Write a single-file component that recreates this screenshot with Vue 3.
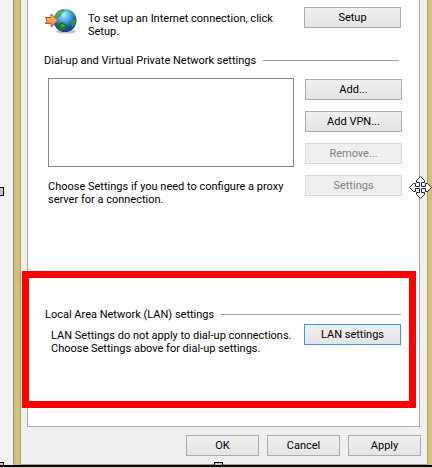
<template>
  <div class="canvas">
    <div class="frame">
      <main class="dialog">
        <div class="panel">
          <section class="row setup">
            <svg class="globe" width="32" height="27" viewBox="0 0 32 27" aria-hidden="true">
              <defs>
                <radialGradient id="sea" cx="45%" cy="25%" r="75%">
                  <stop offset="0" stop-color="#b5f0ff" />
                  <stop offset="0.35" stop-color="#52aee8" />
                  <stop offset="0.7" stop-color="#2456c4" />
                  <stop offset="1" stop-color="#163a94" />
                </radialGradient>
                <linearGradient id="arrow" x1="0" y1="0" x2="0" y2="1">
                  <stop offset="0" stop-color="#ffc078" />
                  <stop offset="1" stop-color="#ef7d2c" />
                </linearGradient>
              </defs>
              <ellipse cx="21" cy="23.500" rx="10" ry="2" fill="#c3c3c3" />
              <circle cx="20" cy="12.500" r="11.500" fill="url(#sea)" />
              <path d="M10 7 13 3 18 1 20 3 17 5 15 9 12 10 9 12z" fill="#4fa65b" />
              <path d="M25 3 28 5 30 8 28 8 26 6z" fill="#49a63c" />
              <path d="M28 11 31 12 30 17 27 19 26 15z" fill="#2d9a2c" />
              <path d="M13 16 17 14 20 16 23 17 20 21 17 23 13 21z" fill="#15811e" />
              <path d="M15 17 18 16 20 18 17 20z" fill="#3aad32" />
              <path d="M0.500 9.500H6V6L13 12.500 6 19V15.500H0.500L2 12.500z" fill="url(#arrow)" stroke="#b8571c" />
            </svg>
            <p class="text">To set up an Internet connection, click Setup.</p>
            <button type="button" class="btn">Setup</button>
          </section>

          <h2 class="heading dialup-heading">Dial-up and Virtual Private Network settings</h2>
          <section class="row dialup">
            <div class="dialup-main">
              <select class="list" size="5" aria-label="Dial-up and Virtual Private Network settings"></select>
              <p class="text">Choose Settings if you need to configure a proxy server for a connection.</p>
            </div>
            <div class="stack">
              <button
                v-for="item in dialupButtons"
                :key="item.label"
                type="button"
                class="btn"
                :disabled="item.disabled"
              >{{ item.label }}</button>
            </div>
          </section>

          <section class="lan">
            <h2 class="heading">Local Area Network (LAN) settings</h2>
            <div class="row lan-row">
              <p class="text">LAN Settings do not apply to dial-up connections.<br>Choose Settings above for dial-up settings.</p>
              <button type="button" class="btn focused">LAN settings</button>
            </div>
          </section>
        </div>

        <footer class="footer">
          <button v-for="label in footerButtons" :key="label" type="button" class="btn">{{ label }}</button>
        </footer>
      </main>
    </div>

    <span class="handle handle-left"></span>
    <span class="handle handle-corner"></span>
    <span class="handle handle-bottom"></span>
    <svg class="cursor" width="23" height="23" viewBox="0 0 23 23" aria-hidden="true">
      <path
        d="M11.500 0.500 15.500 4.500V6.500H12.500V10.500H16.500V7.500H18.500L22.500 11.500 18.500 15.500H16.500V12.500H12.500V16.500H15.500V18.500L11.500 22.500 7.500 18.500V16.500H10.500V12.500H6.500V15.500H4.500L0.500 11.500 4.500 7.500H6.500V10.500H10.500V6.500H7.500V4.500z"
        fill="#fff"
        stroke="#27233a"
      />
    </svg>
  </div>
</template>

<script setup>
const dialupButtons = [
  { label: 'Add...', disabled: false },
  { label: 'Add VPN...', disabled: false },
  { label: 'Remove...', disabled: true },
  { label: 'Settings', disabled: true }
];

const footerButtons = ['OK', 'Cancel', 'Apply'];
</script>

<style>
body {
  margin: 0;
  background: #d8cccf;
}
</style>

<style scoped>
.canvas {
  position: relative;
  overflow: hidden;
  padding-left: 13px;
  background: #f1f3f5;
  border-bottom: 2px solid #000;
  font-family: Tahoma, Roboto, "Liberation Sans", sans-serif;
  font-size: 11px;
  line-height: 13px;
  color: #000;
}

/* window border */
.frame {
  padding: 0 4px 0 6px;
  background: #d2bf78;
  border-left: 1px solid #9c9272;
}

.dialog {
  padding: 0 7px 8px 6px;
  background: #efefef;
  border: solid #b09c57;
  border-width: 0 1px 1px;
}

.panel {
  background: #fff;
  border: 1px solid #acacac;
  border-top: 0;
}

.row {
  display: flex;
  align-items: flex-start;
}

.text {
  flex: 1;
  margin: 0;
}

.btn {
  box-sizing: border-box;
  flex: none;
  width: 97px;
  height: 21px;
  padding: 0;
  border: 1px solid #acacac;
  background: linear-gradient(#f0f0f0, #e4e4e4);
  font: inherit;
  color: #000;
}

.btn:disabled {
  border-color: #d9d9d9;
  background: #efefef;
  color: #838383;
}

.btn.focused {
  border-color: #3399ff;
}

.setup {
  padding: 7px 18px 0 17px;
}

.setup .text {
  padding: 5px 16px 0 11px;
}

.globe {
  flex: none;
  margin-top: 1px;
}

.heading {
  display: flex;
  align-items: center;
  gap: 7px;
  margin: 0;
  font-size: 11px;
  font-weight: normal;
}

.heading::after {
  content: "";
  flex: 1;
  height: 1px;
  background: #a0a0a0;
}

.dialup-heading {
  padding: 16px 20px 0 16px;
}

.dialup {
  gap: 11px;
  padding: 11px 17px 0 20px;
}

.dialup-main {
  flex: 1;
}

.list {
  display: block;
  box-sizing: border-box;
  width: 100%;
  height: 89px;
  margin-bottom: 13px;
  border: 1px solid #828790;
  border-radius: 0;
  background: #fff;
}

.stack {
  display: flex;
  flex-direction: column;
  gap: 11px;
  padding-top: 1px;
}

/* highlighted area, reaches over the panel's left edge */
.lan {
  position: relative;
  margin: 65px 3px 18px -6px;
  padding: 30px 8px 46px 16px;
  border: 7px solid #f00;
}

.lan-row {
  padding: 3px 0 0 6px;
}

.lan-row .text {
  padding: 5px 12px 0 0;
}

.footer {
  display: flex;
  justify-content: flex-end;
  gap: 8px;
  margin-right: -1px;
  padding-top: 8px;
}

.footer .btn {
  width: 73px;
}

.handle {
  position: absolute;
  box-sizing: border-box;
  border: 1px solid #000;
  background: #cdbfc2;
}

.handle-left {
  top: 187px;
  left: -1px;
  width: 5px;
  height: 9px;
}

.handle-corner {
  bottom: -2px;
  left: -1px;
  width: 5px;
  height: 5px;
}

.handle-bottom {
  bottom: -2px;
  left: 50%;
  width: 9px;
  height: 5px;
  margin-left: -2px;
}

.cursor {
  position: absolute;
  top: 176px;
  right: 0;
}
</style>
